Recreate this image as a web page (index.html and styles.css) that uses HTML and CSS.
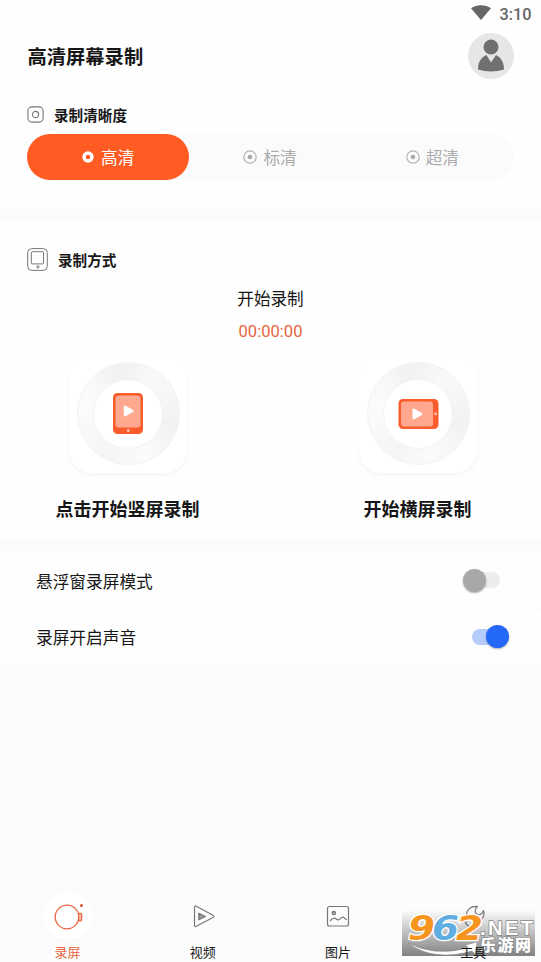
FILE: index.html
```html
<!DOCTYPE html>
<html lang="zh-CN">
<head>
<meta charset="utf-8">
<title>高清屏幕录制</title>
<link rel="stylesheet" href="styles.css">
</head>
<body>
<div class="app">
  <section class="quality">
    <div class="status">
      <svg width="22" height="17" viewBox="0 0 22 17"><path d="M1 4.2C6.500 .1 15.500 .1 21 4.200L11 16Z" fill="#666"/></svg>
      <span>3:10</span>
    </div>
    <header class="header">
      <h1>高清屏幕录制</h1>
      <svg class="avatar" width="46" height="46" viewBox="0 0 46 46"><circle cx="23" cy="23" r="23" fill="#e6e6e6"/><circle cx="23" cy="14" r="7.500" fill="#707070"/><path d="M18.500 22L23 29.500L28 22C33 24.500 36 29 36 36.500Q23 40.500 10 36.500C10 29 13 24.500 18.500 22Z" fill="#707070"/></svg>
    </header>
    <h2 class="label label-quality">
      <svg width="17" height="17" viewBox="0 0 17 17" fill="none" stroke="#777"><rect x=".9" y=".9" width="15.200" height="15.200" rx="4" stroke-width="1.100"/><circle cx="8.500" cy="8.500" r="3.100" stroke-width="1.100"/></svg>
      <span>录制清晰度</span>
    </h2>
    <div class="tabs">
      <div class="tab selected"><svg width="14" height="14" viewBox="0 0 14 14"><circle cx="7" cy="7" r="4" fill="none" stroke="#fff" stroke-width="3.400"/></svg>高清</div>
      <div class="tab"><svg width="14" height="14" viewBox="0 0 14 14"><circle cx="7" cy="7" r="6.200" fill="none" stroke="#b3b3b3" stroke-width="1.200"/><circle cx="7" cy="7" r="2.300" fill="#aaa"/></svg>标清</div>
      <div class="tab"><svg width="14" height="14" viewBox="0 0 14 14"><circle cx="7" cy="7" r="6.200" fill="none" stroke="#b3b3b3" stroke-width="1.200"/><circle cx="7" cy="7" r="2.300" fill="#aaa"/></svg>超清</div>
    </div>
  </section>

  <section class="record">
    <h2 class="label label-mode">
      <svg width="21" height="23" viewBox="0 0 21 23" fill="none" stroke="#777"><rect x=".7" y=".6" width="19.600" height="21.800" rx="4"/><rect x="4.300" y="3.700" width="12.200" height="12.200" rx="1"/><circle cx="10.900" cy="18.900" r="1.100"/></svg>
      <span>录制方式</span>
    </h2>
    <p class="state">开始录制</p>
    <p class="timer">00:00:00</p>
    <div class="modes">
      <div class="mode">
        <div class="card"><div class="ring"><div class="disc">
          <svg width="30" height="41" viewBox="0 0 30 41"><rect width="30" height="41" rx="4.500" fill="#fa5c2c"/><rect x="2.500" y="2.500" width="25" height="32" rx="3" fill="#ffa78f"/><path d="M12 13.700V22.300L19.500 18Z" fill="#fff" stroke="#fff" stroke-width="2.400" stroke-linejoin="round"/><circle cx="15.300" cy="37.500" r="1.500" fill="#ffc2b0"/></svg>
        </div></div></div>
        <h3>点击开始竖屏录制</h3>
      </div>
      <div class="mode">
        <div class="card"><div class="ring"><div class="disc">
          <svg width="41" height="30" viewBox="0 0 41 30"><rect x=".5" width="40" height="30" rx="4.500" fill="#fa5c2c"/><rect x="3" y="2.500" width="32" height="25" rx="3" fill="#ffa78f"/><path d="M15.700 10.700V19.300L23.200 15Z" fill="#fff" stroke="#fff" stroke-width="2.400" stroke-linejoin="round"/><circle cx="37.500" cy="14.800" r="1.500" fill="#ffc2b0"/></svg>
        </div></div></div>
        <h3>开始横屏录制</h3>
      </div>
    </div>
  </section>

  <section class="settings">
    <div class="row"><span>悬浮窗录屏模式</span><div class="switch"><i class="knob"></i></div></div>
    <div class="row"><span>录屏开启声音</span><div class="switch on"><i class="knob"></i></div></div>
  </section>

  <nav class="nav">
    <div class="item active">
      <div class="icon"><svg width="48" height="48" viewBox="0 0 48 48" fill="none" stroke="#e8663f" stroke-width="1.300"><circle cx="23" cy="25" r="11.800"/><rect x="34.600" y="21.400" width="3" height="7.400" rx=".8" fill="#fbc0ac"/><circle cx="37.500" cy="13.600" r="1.500" fill="#dc5532" stroke="none"/></svg></div>
      <span>录屏</span>
    </div>
    <div class="item">
      <div class="icon"><svg width="48" height="48" viewBox="0 0 48 48" fill="none" stroke="#777" stroke-width="1.200" stroke-linejoin="round"><path d="M15.500 15.200V33.200Q15.500 35.200 17.300 34.200L34 25.500Q35.800 24.400 34 23.300L17.300 14.200Q15.500 13.300 15.500 15.200Z"/><path d="M19.800 21.200V27.800L26.500 24.500Z" fill="#999"/></svg></div>
      <span>视频</span>
    </div>
    <div class="item">
      <div class="icon"><svg width="48" height="48" viewBox="0 0 48 48" fill="none" stroke="#777" stroke-width="1.200"><rect x="13.500" y="14.500" width="21" height="19.500" rx="2"/><circle cx="19.800" cy="21" r="1.700" fill="#aaa"/><path d="M16.500 28.500C19.500 25 21 26 23 27.500C25.500 29.500 26.500 25 29 25.200C30.500 25.300 30.500 27.200 32.500 27.500" stroke-linecap="round"/></svg></div>
      <span>图片</span>
    </div>
    <div class="item">
      <div class="icon"><svg width="48" height="48" viewBox="0 0 48 48" fill="none" stroke="#777" stroke-width="1.200" stroke-linejoin="round"><path d="M18 26C16 19 21 14 28.500 14.500C25.500 17 25.500 20.500 28 22.500C31 23.500 33.500 21.500 34.500 18.500C36.500 25 31.500 30 26.500 29.500L20 35L16.500 31Z"/></svg></div>
      <span>工具</span>
    </div>
  </nav>

  <svg class="watermark" width="133" height="46" viewBox="0 0 133 46">
    <defs><linearGradient id="shade" x1="0" y1="0" x2="0" y2="1"><stop offset="0" stop-color="#777" stop-opacity="0"/><stop offset="1" stop-color="#777" stop-opacity=".92"/></linearGradient></defs>
    <rect width="133" height="46" fill="url(#shade)"/>
    <path d="M6 33Q32 47 66 38L64 35L75 32L73 44L70 41Q31 52 6 33Z" fill="#fff" stroke="#888" stroke-width=".5"/>
    <g class="digits">
      <text x="6" y="30" textLength="27" lengthAdjust="spacingAndGlyphs" fill="#f7941e">9</text>
      <text x="30" y="30" textLength="27" lengthAdjust="spacingAndGlyphs" fill="#5fade2">6</text>
      <text x="54" y="30" textLength="27" lengthAdjust="spacingAndGlyphs" fill="#f7941e">2</text>
    </g>
    <text class="net" x="78" y="25" textLength="53" lengthAdjust="spacing">.NET</text>
    <text class="site" x="78" y="41" textLength="51">乐游网</text>
  </svg>
</div>
</body>
</html>
```
FILE: styles.css
```css
* { box-sizing: border-box; }
body {
  margin: 0;
  background: #fbfbfb;
  color: #161616;
  font-family: Roboto, "Noto Sans CJK SC", sans-serif;
}
h1, h2, h3, p { margin: 0; }
svg { display: block; flex: none; }
.app {
  position: relative;
  width: 541px;
  height: 962px;
  display: flex;
  flex-direction: column;
  overflow: hidden;
}
.quality { height: 209px; background: #fefefe; }
.status {
  height: 28px;
  padding: 4px 9.5px 0 0;
  display: flex;
  justify-content: flex-end;
  gap: 7px;
  color: #666;
  font-size: 16.3px;
  font-weight: 500;
  line-height: 21px;
}
.header {
  height: 55px;
  padding: 0 27px 0 27.5px;
  display: flex;
  justify-content: space-between;
  align-items: center;
}
.header h1 { padding-top: 4px; font-size: 19.3px; line-height: 28px; }
.label {
  display: flex;
  align-items: center;
  gap: 10px;
  height: 24px;
  margin: 19px 0 0 27px;
  font-size: 14.6px;
  line-height: 24px;
}
.label-quality span { padding-top: 3px; }
.tabs {
  display: grid;
  grid-template-columns: repeat(3, 1fr);
  width: 487px;
  height: 46px;
  margin: 8px 0 0 27px;
  border-radius: 23px;
  background: #fbfbfb;
}
.tab {
  display: flex;
  align-items: center;
  justify-content: center;
  gap: 6px;
  padding-right: 1px;
  border-radius: 23px;
  color: #acacac;
  font-size: 16.6px;
}
.tab.selected { background: #ff5b22; color: #fff; }
.record { height: 321px; margin-top: 11px; background: #fefefe; overflow: hidden; }
.label-mode { margin-top: 27px; }
.label-mode span { padding-top: 3px; }
.state, .timer { text-align: center; font-size: 16.6px; line-height: 24px; }
.state { margin-top: 17px; }
.timer { margin-top: 8px; color: #e8663f; }
.modes { display: flex; justify-content: space-between; padding: 0 50px 0 54px; margin-top: 11px; }
.mode { display: flex; flex-direction: column; align-items: center; width: 147px; }
.card {
  width: 118px;
  height: 118px;
  padding: 7px 8px;
  border-radius: 23px;
  background: #fff;
  box-shadow: 0 2px 4px rgba(0, 0, 0, .045);
}
.ring {
  width: 103px;
  height: 103px;
  display: grid;
  place-items: center;
  border: 1px solid #fcefed;
  border-radius: 50%;
  background: conic-gradient(#f4f3f4, #f9f9f9 35deg, #f3f2f3 105deg, #fbfbfb 160deg, #f6f5f6 210deg, #fcfcfc 280deg, #f9f9f9 310deg, #f3f2f3 340deg, #f4f3f4);
}
.disc {
  width: 70px;
  height: 70px;
  display: grid;
  place-items: center;
  border: 1px solid #fcefed;
  border-radius: 50%;
  background: #fff;
}
.mode h3 { margin-top: 24px; font-size: 18px; line-height: 26px; white-space: nowrap; }
.settings { margin-top: 11px; }
.row {
  height: 56.5px;
  padding: 0 31px 0 36px;
  display: flex;
  align-items: center;
  justify-content: space-between;
  border-radius: 5px;
  background: #fefefe;
  font-size: 16.7px;
}
.row span { padding-top: 1px; }
.switch {
  width: 37px;
  height: 16px;
  margin-right: 10px;
  display: flex;
  align-items: center;
  border-radius: 8px;
  background: #ececec;
}
.switch.on { margin-right: 1px; background: #b5cbfc; justify-content: flex-end; }
.knob {
  flex: none;
  width: 23px;
  height: 23px;
  border-radius: 50%;
  background: #a8a8a8;
  box-shadow: 0 1px 2px rgba(0, 0, 0, .3);
}
.on .knob { background: #2468f8; }
.nav {
  display: grid;
  grid-template-columns: repeat(4, 1fr);
  height: 74px;
  margin-top: auto;
  background: #fcfcfc;
}
.item {
  display: flex;
  flex-direction: column;
  align-items: center;
  padding: 4px 0 0 0;
  font-size: 13px;
  line-height: 20px;
}
.item .icon { width: 48px; height: 48px; border-radius: 50%; }
.item span { position: relative; z-index: 2; margin-top: 3px; white-space: nowrap; }
.active { color: #e8663f; }
.active .icon { background: #fff; box-shadow: 0 1px 2px rgba(0, 0, 0, .02); }
.watermark { position: absolute; z-index: 1; left: 402px; top: 910px; }
.digits {
  font: italic 700 33px "DejaVu Sans", sans-serif;
  stroke: #fff;
  stroke-width: 2.5px;
  paint-order: stroke;
}
.net {
  font: 700 20px "Liberation Sans", sans-serif;
  fill: #fff;
  stroke: #888;
  stroke-width: 1.5px;
  paint-order: stroke;
}
.site {
  font: 900 16px "Noto Sans CJK SC", sans-serif;
  fill: #fff;
  stroke: #888;
  stroke-width: 1.5px;
  paint-order: stroke;
}
```
